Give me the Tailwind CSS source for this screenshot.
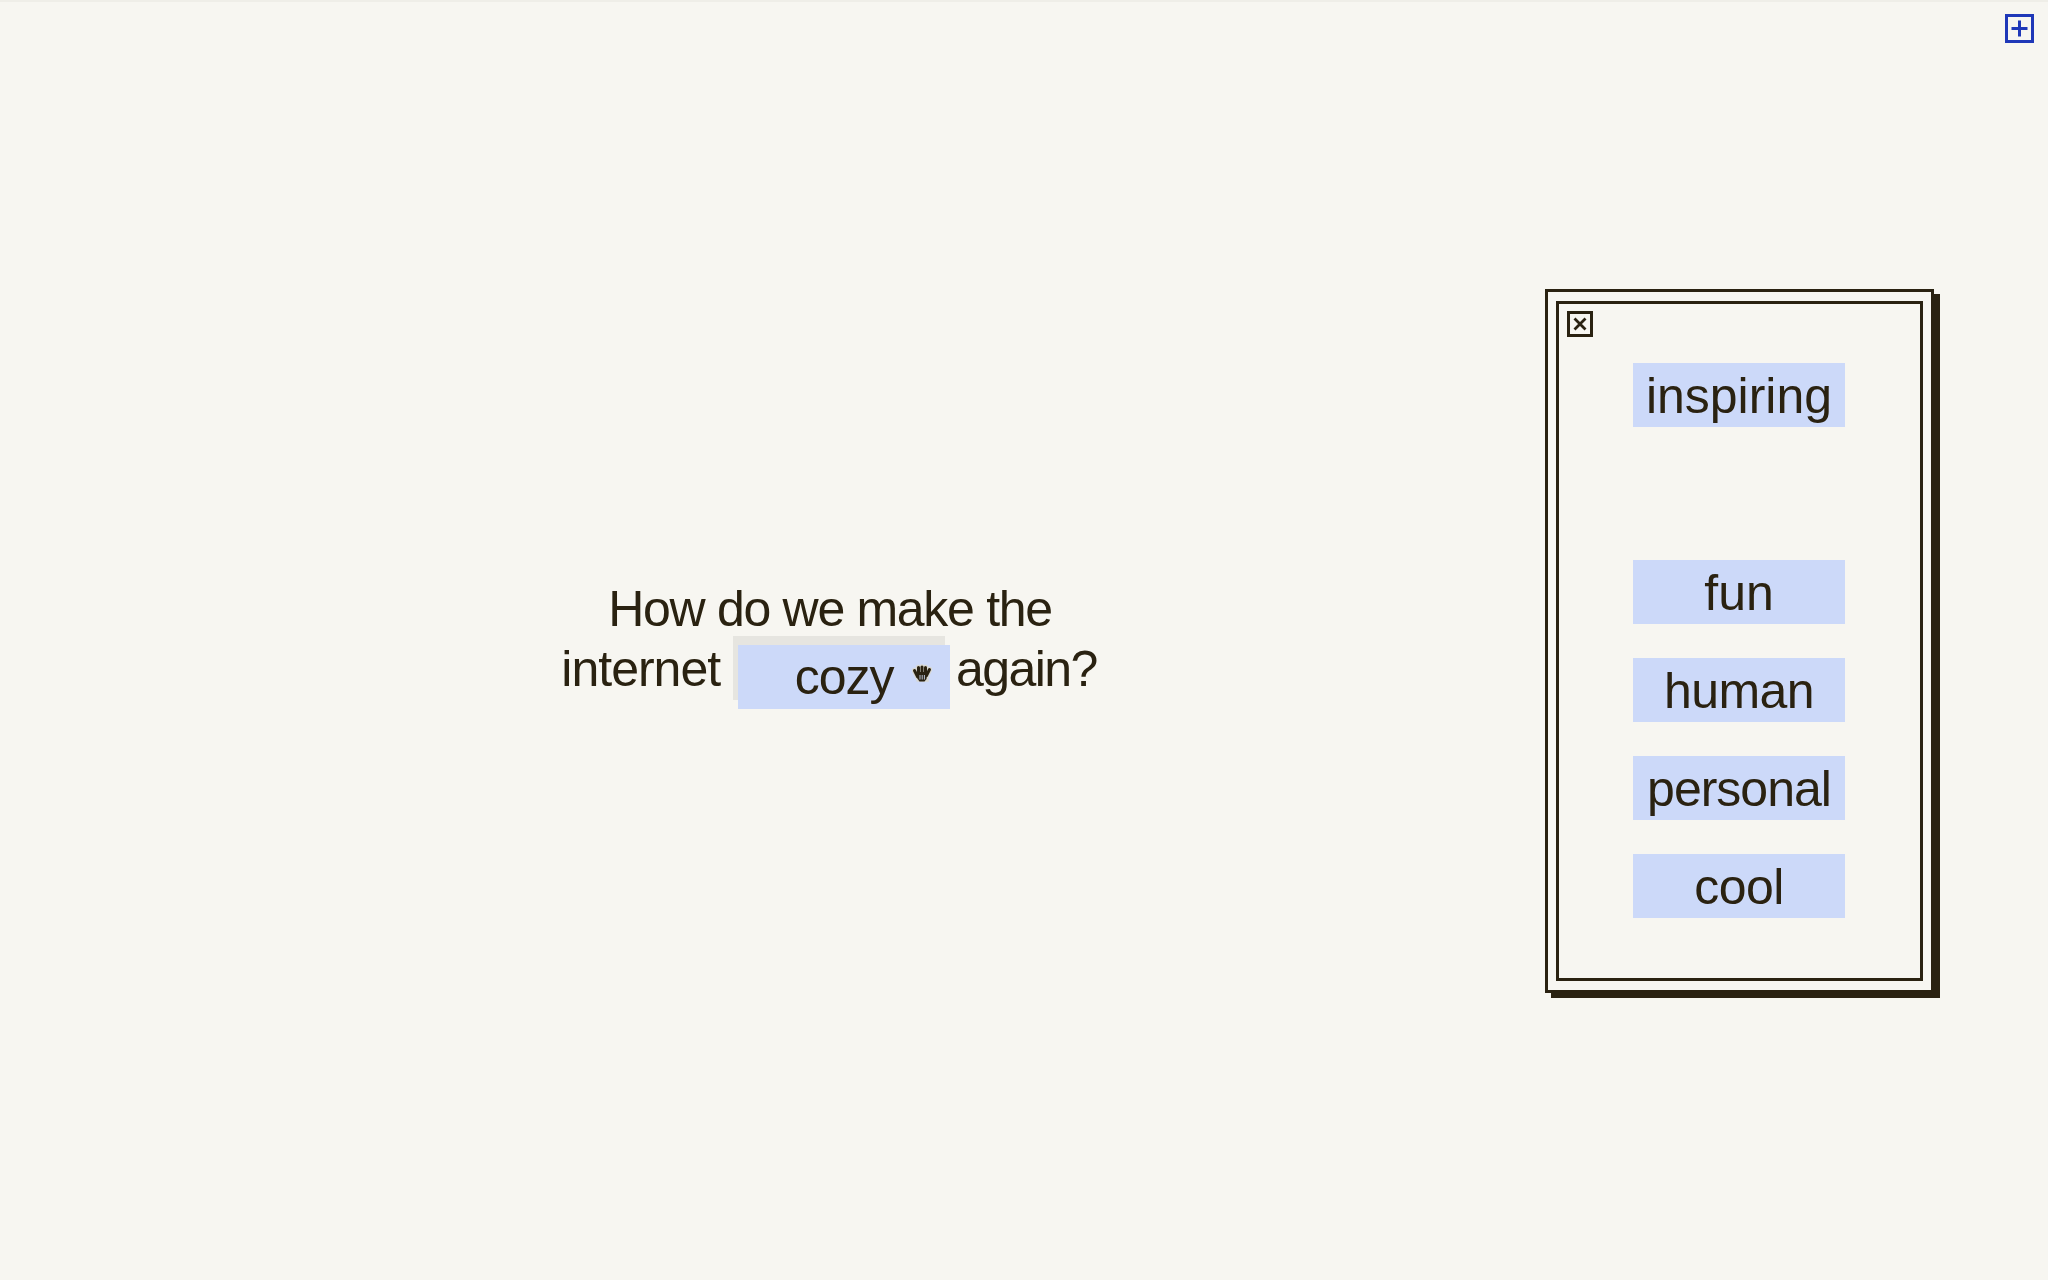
<!DOCTYPE html>
<html>
<head>
<meta charset="utf-8">
<script src="https://cdn.jsdelivr.net/npm/@tailwindcss/browser@4"></script>
</head>
<body class="m-0">
<div class="relative h-[1280px] w-[2048px] overflow-hidden border-t-2 border-[#efeee8] bg-[#f7f6f1] font-['Liberation_Sans',sans-serif] text-[50px] leading-[60px] text-[#2a2211]">
  <button class="absolute right-[14px] top-[12px] flex h-[29px] w-[29px] items-center justify-center border-[3px] border-[#1f38b8]">
    <svg width="17" height="17" viewBox="0 0 17 17"><path d="M8.500 0.500v16M0.500 8.500h16" stroke="#1f38b8" stroke-width="3"/></svg>
  </button>
  <div class="flex h-full">
    <div class="flex h-full w-[1660px] flex-col items-center justify-center pb-[5px]">
      <div class="tracking-[-1.3px]">How do we make the</div>
      <div class="flex h-[60px] items-center pr-[2px]">
        <span class="mr-[13px] tracking-[-1px]">internet</span>
        <span class="relative mb-[2px] mr-[11px] h-[64px] w-[212px] bg-[#e6e5e0]">
          <span class="absolute left-[5px] top-[9px] flex h-[64px] w-[212px] items-center justify-center bg-[#ccd9f9] tracking-[-1px]">cozy
            <svg class="absolute left-[174px] top-[19px]" width="20" height="20" viewBox="0 0 20 20">
              <g fill="none" stroke="#d8d8d2" stroke-width="5.500" stroke-linecap="round"><path d="M2.500 6.500l3 6M6.500 3.500v8M10 3v8M13.500 3.500v8M17.500 5.500l-3 6"/><path d="M6 9h8v6h-7z"/></g>
              <g fill="none" stroke="#2a2211" stroke-width="3" stroke-linecap="round"><path d="M2.500 6.500l3 6M6.500 3.500v8M10 3v8M13.500 3.500v8M17.500 5.500l-3 6"/></g>
              <path d="M4 8h11.500l-1 7-2 2.500h-5l-2.500-3.500z" fill="#2a2211"/>
              <path d="M8 11v4.500M10.200 11v4.500M12.400 11v4.500" stroke="#b9c3d6" stroke-width="1"/>
            </svg>
          </span>
        </span>
        <span class="tracking-[-1.600px]">again?</span>
      </div>
    </div>
    <div class="mt-[287px] ml-[-115px] h-[704px] w-[389px] shrink-0 border-[3px] border-[#2a2211] bg-[#f7f6f1] py-[9px] pr-[8px] pl-[8px] shadow-[6px_5px_0_#2a2211]">
      <div class="h-full border-[3px] border-[#2a2211] pt-[7px] pl-[8px] pr-[9px]">
        <button class="flex h-[26px] w-[26px] items-center justify-center border-[3px] border-[#2a2211]">
          <svg width="14" height="14" viewBox="0 0 14 14"><path d="M1.500 1.500l11 11M12.500 1.500l-11 11" stroke="#2a2211" stroke-width="2.800"/></svg>
        </button>
        <div class="mt-[26px] flex flex-col items-center gap-[34px]">
          <div class="flex h-[64px] w-[212px] items-center justify-center bg-[#ccd9f9] pt-[2px] tracking-[0px]">inspiring</div>
          <div class="h-[65px] w-[212px]"></div>
          <div class="flex h-[64px] w-[212px] items-center justify-center bg-[#ccd9f9] pt-[2px] tracking-[0px]">fun</div>
          <div class="flex h-[64px] w-[212px] items-center justify-center bg-[#ccd9f9] pt-[2px] tracking-[-0.600px]">human</div>
          <div class="flex h-[64px] w-[212px] items-center justify-center bg-[#ccd9f9] pt-[2px] tracking-[-1px]">personal</div>
          <div class="flex h-[64px] w-[212px] items-center justify-center bg-[#ccd9f9] pt-[2px] tracking-[-0.500px]">cool</div>
        </div>
      </div>
    </div>
  </div>
</div>
</body>
</html>
